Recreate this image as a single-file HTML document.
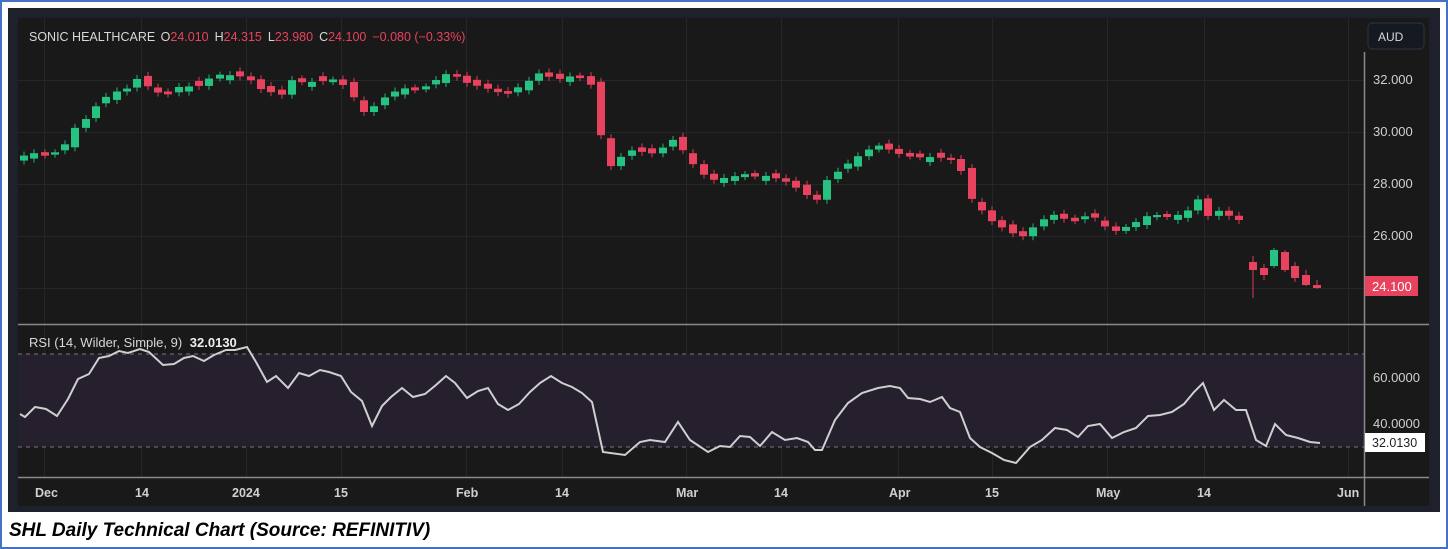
<!DOCTYPE html>
<html><head><meta charset="utf-8"><style>
html,body{margin:0;padding:0;background:#fff;}
body{width:1448px;height:549px;position:relative;overflow:hidden;font-family:"Liberation Sans",sans-serif;}
svg{position:absolute;left:0;top:0}
</style></head><body>
<svg id="s" width="1448" height="549" xmlns="http://www.w3.org/2000/svg">
<rect x="1" y="1" width="1446" height="547" fill="#fff" stroke="#4472c4" stroke-width="2"/>
<rect x="8" y="8" width="1432" height="504" fill="#1e212b"/>
<rect x="18" y="18" width="1411" height="488" fill="#191919"/>
<g id="grid" stroke="#262626" stroke-width="1"></g>
<rect x="18" y="354" width="1346" height="93" fill="#251f2e"/>
<line x1="18" y1="354" x2="1364" y2="354" stroke="#777" stroke-dasharray="4,4"/>
<line x1="18" y1="447" x2="1364" y2="447" stroke="#777" stroke-dasharray="4,4"/>
<g id="candles"></g>
<polyline id="rsi" fill="none" stroke="#cfcfcf" stroke-width="2"/>
<line x1="18" y1="324.5" x2="1429" y2="324.5" stroke="#8a8a8a" stroke-width="1.5"/>
<line x1="18" y1="477.5" x2="1429" y2="477.5" stroke="#8a8a8a" stroke-width="1.5"/>
<line x1="1364.5" y1="52" x2="1364.5" y2="506" stroke="#8a8a8a" stroke-width="1.5"/>
<rect x="1368" y="23" width="56" height="26" rx="4" fill="#151922" stroke="#2e3340"/>
<text x="1378" y="41" fill="#d8d8d8" font-size="12">AUD</text>
<g fill="#d0d0d0" font-size="13">
<text x="1373" y="84">32.000</text><text x="1373" y="136">30.000</text><text x="1373" y="188">28.000</text><text x="1373" y="240">26.000</text>
<text x="1373" y="382">60.0000</text><text x="1373" y="428">40.0000</text>
</g>
<rect x="1365" y="276" width="53" height="20" fill="#e8435e"/>
<text x="1372" y="291" fill="#fff" font-size="13">24.100</text>
<rect x="1365" y="433" width="60" height="19" fill="#fff"/>
<text x="1372" y="447" fill="#222" font-size="12.5">32.0130</text>
<g fill="#d0d0d0" font-size="12.5" font-weight="bold">
<text x="35" y="497">Dec</text><text x="135" y="497">14</text><text x="232" y="497">2024</text><text x="334" y="497">15</text>
<text x="456" y="497">Feb</text><text x="555" y="497">14</text><text x="676" y="497">Mar</text><text x="774" y="497">14</text>
<text x="889" y="497">Apr</text><text x="985" y="497">15</text><text x="1096" y="497">May</text><text x="1197" y="497">14</text><text x="1337" y="497">Jun</text>
</g>
<text x="29" y="41" font-size="12.5" fill="#d8d8d8">SONIC HEALTHCARE <tspan dx="2">O</tspan><tspan fill="#e8435e">24.010</tspan><tspan dx="6">H</tspan><tspan fill="#e8435e">24.315</tspan><tspan dx="6">L</tspan><tspan fill="#e8435e">23.980</tspan><tspan dx="6">C</tspan><tspan fill="#e8435e">24.100</tspan><tspan dx="6" fill="#e8435e">−0.080 (−0.33%)</tspan></text>
<text x="29" y="347" font-size="13" fill="#d8d8d8">RSI (14, Wilder, Simple, 9) <tspan dx="4" font-weight="bold" fill="#eee">32.0130</tspan></text>
<text x="9" y="536" font-size="19" font-weight="bold" font-style="italic" fill="#000">SHL Daily Technical Chart (Source: REFINITIV)</text>
</svg>
<script>
var NS="http://www.w3.org/2000/svg";
function el(p,t,a){var e=document.createElementNS(NS,t);for(var k in a)e.setAttribute(k,a[k]);p.appendChild(e);return e;}
var g=document.getElementById('grid');
[80,132,184,236,288].forEach(function(y){el(g,'line',{x1:18,x2:1364,y1:y+.5,y2:y+.5});});
[378,424].forEach(function(y){el(g,'line',{x1:18,x2:1364,y1:y+.5,y2:y+.5});});
[44,141,246,341,466,562,686,781,898,992,1107,1204,1348].forEach(function(x){el(g,'line',{x1:x+.5,x2:x+.5,y1:18,y2:477});});
var P=[[24,157],[38,153],[52,155],[66,152],[78,130],[92,118],[106,100],[120,92],[134,88],[141,78],[155,88],[169,96],[183,87],[204,86],[218,76],[239,75],[253,78],[267,90],[288,95],[295,80],[316,82],[344,80],[357,95],[371,115],[385,100],[406,88],[427,90],[441,80],[455,72],[469,82],[497,90],[511,95],[532,82],[546,72],[560,80],[581,75],[595,82],[602,120],[614,168],[634,150],[662,154],[676,138],[690,152],[704,172],[718,180],[746,175],[774,176],[795,183],[816,198],[823,200],[830,182],[851,165],[872,150],[886,146],[907,155],[949,158],[963,162],[977,200],[998,222],[1026,238],[1047,220],[1061,214],[1075,222],[1096,214],[1117,232],[1131,228],[1152,216],[1180,216],[1194,210],[1201,195],[1212,217],[1222,210],[1243,220]];
function interp(x){for(var i=1;i<P.length;i++){if(x<=P[i][0]){var a=P[i-1],b=P[i];return a[1]+(b[1]-a[1])*(x-a[0])/(b[0]-a[0]);}}return P[P.length-1][1];}
var c=document.getElementById('candles');
function candle(x,o,cl,h,l){var up=cl<o;var col=up?'#26c281':'#e8435e';var top=Math.min(o,cl),bot=Math.max(o,cl);if(bot-top<2){top-=1;bot+=1;}
el(c,'line',{x1:x,x2:x,y1:h,y2:l,stroke:up?'#1f9a66':'#b83650','stroke-width':1.2});
el(c,'rect',{x:x-4,y:top,width:8,height:bot-top,fill:col});}
var prev=interp(24);var k=0;
for(var x=24;x<=1245;x+=10.3){var cl=interp(x+5);var m=k%4;var o=prev+(m==0?-3:m==1?3:m==2?0:-1);k++;if(Math.abs(o-cl)<4&&m<2){o=cl+(m==0?5:-5);}candle(Math.round(x),o,cl,Math.min(o,cl)-4,Math.max(o,cl)+4);prev=cl;}
var L=[[1253,262,270,256,298],[1264,268,275,264,280],[1274,266,250,248,268],[1285,252,270,250,272],[1295,266,278,262,282],[1306,275,285,270,286],[1317,285,288,280,289]];
L.forEach(function(d){candle(d[0],d[1],d[2],d[3],d[4]);});
var R=[[20,414],[25,417],[35,407],[46,409],[57,416],[68,399],[78,379],[89,374],[99,358],[109,356],[119,351],[128,353],[140,349],[149,352],[163,365],[174,364],[184,358],[193,356],[204,361],[214,355],[226,350],[235,350],[247,347],[256,362],[267,382],[276,376],[288,388],[299,373],[309,376],[320,370],[329,372],[341,376],[351,392],[362,401],[372,426],[382,406],[391,397],[402,388],[413,397],[425,394],[436,385],[446,376],[455,383],[467,398],[478,391],[488,388],[498,404],[508,410],[519,404],[530,392],[540,383],[551,376],[562,383],[572,387],[582,393],[592,402],[603,452],[625,455],[640,442],[650,440],[665,442],[678,422],[690,440],[708,452],[720,446],[730,447],[740,436],[750,437],[760,446],[772,432],[785,440],[797,438],[808,442],[815,450],[822,450],[835,420],[848,403],[862,393],[878,388],[890,386],[900,388],[908,398],[920,399],[930,402],[942,397],[950,408],[960,412],[970,438],[980,447],[992,453],[1004,460],[1016,463],[1030,447],[1042,440],[1055,428],[1067,430],[1078,437],[1088,426],[1100,424],[1112,438],[1124,432],[1136,428],[1148,416],[1160,415],[1172,412],[1184,404],[1194,392],[1203,383],[1214,410],[1224,400],[1236,410],[1246,410],[1256,440],[1266,446],[1275,424],[1286,435],[1298,438],[1310,442],[1320,443]];
document.getElementById('rsi').setAttribute('points',R.map(function(p){return p.join(',');}).join(' '));
</script>
</body></html>
